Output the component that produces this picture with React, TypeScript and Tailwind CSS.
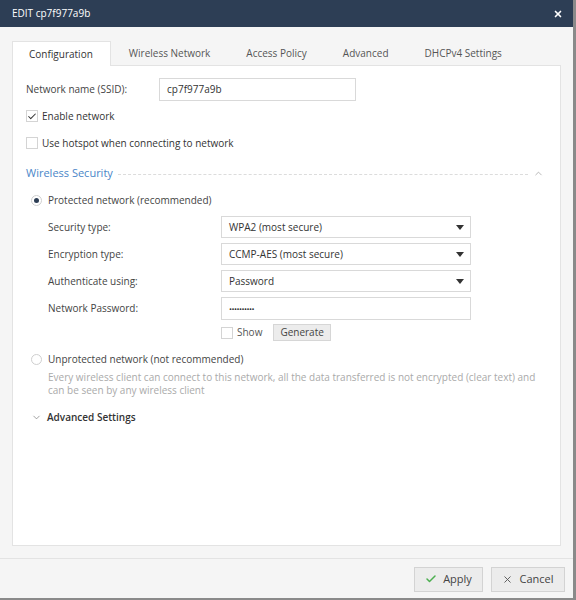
import { Check, X, ChevronUp, ChevronDown } from 'lucide-react';

function Caret() {
  return (
    <svg width="8" height="5" viewBox="0 0 8 5" className="text-[#333]">
      <path d="M0 0h8L4 5z" fill="currentColor" />
    </svg>
  );
}

function Select({ value }: { value: string }) {
  return (
    <div className="flex h-[22px] w-[250px] items-center justify-between border border-[#d9d9d9] bg-white pl-[7px] pr-[6px] text-[#333]">
      <span>{value}</span>
      <Caret />
    </div>
  );
}

function Box({ checked }: { checked?: boolean }) {
  return (
    <span className="flex h-[12px] w-[12px] items-center justify-center border border-[#d4d4d4] bg-white">
      {checked && <Check className="h-[11px] w-[11px] text-[#333]" strokeWidth={2.5} />}
    </span>
  );
}

function Radio({ checked }: { checked?: boolean }) {
  return (
    <span className="flex h-[11px] w-[11px] items-center justify-center rounded-full border border-[#cfcfcf] bg-white">
      {checked && <span className="h-[5px] w-[5px] rounded-full bg-[#2d3e55]" />}
    </span>
  );
}

export default function App() {
  const tabs = ['Configuration', 'Wireless Network', 'Access Policy', 'Advanced', 'DHCPv4 Settings'];
  const rows = [
    { label: 'Security type:', value: 'WPA2 (most secure)' },
    { label: 'Encryption type:', value: 'CCMP-AES (most secure)' },
    { label: 'Authenticate using:', value: 'Password' },
  ];

  return (
    <div
      className="flex h-[600px] w-[576px] flex-col overflow-hidden border-r-[3px] border-b-[2px] border-[#8a8a8a] bg-[#f5f5f5] text-[10px] text-[#444]"
      style={{ fontFamily: '"Open Sans", "Noto Sans", sans-serif' }}
    >
      <div className="flex h-[27px] shrink-0 items-center justify-between bg-[#2d3e55] pl-[12px] pr-[10px] text-white">
        <span className="text-[10px]">EDIT cp7f977a9b</span>
        <X className="h-[10px] w-[10px]" strokeWidth={4} />
      </div>

      <div className="flex flex-1 flex-col px-[12px] pt-[14px]">
        <div className="flex h-[24px] items-stretch">
          {tabs.map((t, i) => (
            <div
              key={t}
              className={
                i === 0
                  ? 'relative z-10 -mb-px flex items-center border border-b-0 border-[#e3e3e3] bg-white pl-[16px] pr-[17px] text-[#333]'
                  : 'flex items-center px-[18px] text-[#555]'
              }
            >
              {t}
            </div>
          ))}
        </div>

        <div className="h-[481px] border border-[#e3e3e3] bg-white pl-[13px] pr-[14px] pt-[12px]">
          <div className="flex h-[23px] items-center">
            <span className="w-[133px]">Network name (SSID):</span>
            <div className="flex h-[23px] w-[197px] items-center border border-[#d9d9d9] px-[7px] text-[#333]">cp7f977a9b</div>
          </div>

          <label className="mt-[7px] flex h-[16px] items-center gap-[4px]">
            <Box checked />
            <span className="text-[#333]">Enable network</span>
          </label>
          <label className="mt-[11px] flex h-[16px] items-center gap-[4px]">
            <Box />
            <span className="text-[#333]">Use hotspot when connecting to network</span>
          </label>

          <div className="mt-[14px] flex h-[16px] items-center">
            <span className="text-[11px] text-[#4a86c8]">Wireless Security</span>
            <div className="mx-[5px] mt-[2px] flex-1 border-t border-dashed border-[#dcdcdc]" />
            <ChevronUp className="mr-[2px] h-[11px] w-[11px] text-[#999]" strokeWidth={1.5} />
          </div>

          <div className="pl-[5px]">
            <label className="mt-[11px] flex h-[16px] items-center gap-[6px]">
              <Radio checked />
              <span className="text-[#444]">Protected network (recommended)</span>
            </label>

            <div className="mt-[8px] flex flex-col gap-[5px] pl-[17px]">
              {rows.map((r) => (
                <div key={r.label} className="flex items-center">
                  <span className="w-[173px]">{r.label}</span>
                  <Select value={r.value} />
                </div>
              ))}
              <div className="flex items-center">
                <span className="w-[173px]">Network Password:</span>
                <div className="flex h-[23px] w-[250px] items-center border border-[#d9d9d9] px-[7px] text-[8px] tracking-[-0.5px] text-[#333]">
                  ••••••••••
                </div>
              </div>
              <div className="-mt-[1px] flex h-[17px] items-center pl-[173px]">
                <Box />
                <span className="ml-[4px] text-[#555]">Show</span>
                <span className="ml-[11px] flex h-[17px] items-center border border-[#d6d6d6] bg-[#ececec] px-[6px] text-[#444]">
                  Generate
                </span>
              </div>
            </div>

            <label className="mt-[10px] flex h-[16px] items-center gap-[6px]">
              <Radio />
              <span className="text-[#444]">Unprotected network (not recommended)</span>
            </label>
            <p className="mt-[4px] pl-[17px] pr-[8px] leading-[13px] text-[#aaa]">
              Every wireless client can connect to this network, all the data transferred is not encrypted (clear text) and can be seen by any wireless client
            </p>

            <div className="mt-[12px] flex h-[16px] items-center gap-[5px]">
              <ChevronDown className="h-[11px] w-[11px] text-[#777]" strokeWidth={1.5} />
              <span className="font-semibold text-[#333]">Advanced Settings</span>
            </div>
          </div>
        </div>
      </div>

      <div className="flex h-[40px] shrink-0 items-center justify-end gap-[8px] border-t border-[#e3e3e3] pr-[8px] pt-[1px]">
        <div className="flex h-[25px] w-[69px] items-center justify-center gap-[6px] border border-[#d3d3d3] bg-[#ececec] text-[11px] text-[#444]">
          <Check className="h-[12px] w-[12px] text-[#4caf50]" strokeWidth={3} />
          Apply
        </div>
        <div className="flex h-[25px] w-[74px] items-center justify-center gap-[6px] border border-[#d3d3d3] bg-[#ececec] text-[11px] text-[#444]">
          <X className="h-[11px] w-[11px] text-[#555]" strokeWidth={2} />
          Cancel
        </div>
      </div>
    </div>
  );
}
